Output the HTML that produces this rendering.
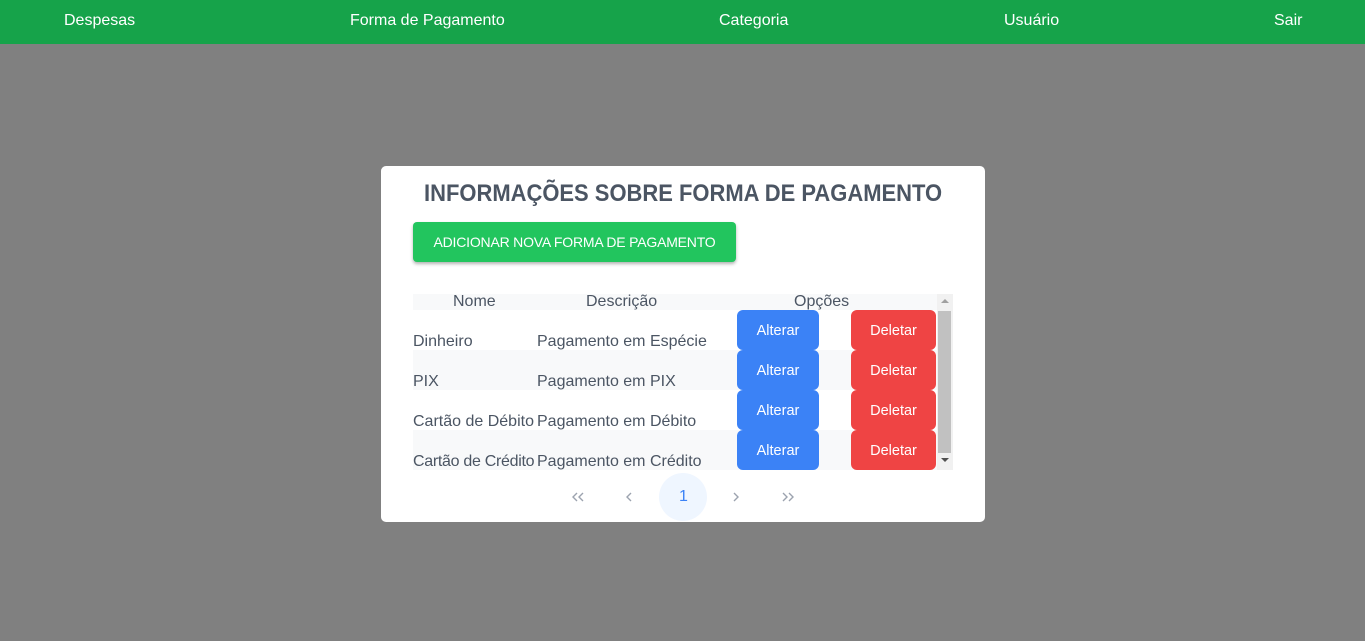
<!DOCTYPE html>
<html><head><meta charset="utf-8"><style>
*{margin:0;padding:0;box-sizing:border-box}
body{width:1365px;height:641px;background:#808080;font-family:"Liberation Sans",sans-serif;position:relative;overflow:hidden}
.nav{position:absolute;left:0;top:0;width:1365px;height:44px;background:#16a34a;color:#fff;font-size:16px}
.nav span{position:absolute;top:12px}
.card{position:absolute;left:381px;top:166px;width:604px;height:356px;background:#fff;border-radius:5px}
.title{position:absolute;left:43px;top:14px;font-size:24px;font-weight:bold;color:#4b5563;white-space:nowrap;transform-origin:0 0;transform:scaleX(0.915)}
.add{position:absolute;left:32px;top:56px;width:323px;height:40px;background:#22c55e;border-radius:4px;color:#fff;font-size:14px;letter-spacing:-0.2px;text-align:center;line-height:41px;box-shadow:0 2px 3px rgba(0,0,0,.3)}
.tbl{position:absolute;left:32px;top:128px;width:540px;height:176px;color:#4b5563;font-size:16px}
.hdr{position:absolute;left:0;top:0;width:524px;height:16px;background:#f8f9fa}
.hdr span{position:absolute;top:-1px}
.row{position:absolute;left:0;width:524px;height:40px}
.row.g{background:#f8f9fa}
.row span.t{position:absolute;top:23px;white-space:nowrap}
.b{position:absolute;top:0;height:40px;border-radius:6px;color:#fff;font-size:14.5px;text-align:center;line-height:43px}
.b.a{left:324px;width:82px;background:#3b82f6}
.b.d{left:438px;width:85px;background:#ef4444}
.sb{position:absolute;left:524px;top:0;width:16px;height:176px;background:#f1f1f1}
.sb .th{position:absolute;left:1px;top:17px;width:13px;height:142px;background:#c1c1c1}
.pg{position:absolute;top:325px}
</style></head><body>
<div class="nav">
<span style="left:64px">Despesas</span>
<span style="left:350px">Forma de Pagamento</span>
<span style="left:719px">Categoria</span>
<span style="left:1004px">Usuário</span>
<span style="left:1274px">Sair</span>
</div>
<div class="card">
<div class="title">INFORMAÇÕES SOBRE FORMA DE PAGAMENTO</div>
<div class="add">ADICIONAR NOVA FORMA DE PAGAMENTO</div>
<div class="tbl">
<div class="hdr"><span style="left:40px">Nome</span><span style="left:173px">Descrição</span><span style="left:381px">Opções</span></div>
<div class="row" style="top:16px"><span class="t" style="left:0">Dinheiro</span><span class="t" style="left:124px">Pagamento em Espécie</span><div class="b a">Alterar</div><div class="b d">Deletar</div></div>
<div class="row g" style="top:56px"><span class="t" style="left:0">PIX</span><span class="t" style="left:124px">Pagamento em PIX</span><div class="b a">Alterar</div><div class="b d">Deletar</div></div>
<div class="row" style="top:96px"><span class="t" style="left:0">Cartão de Débito</span><span class="t" style="left:124px">Pagamento em Débito</span><div class="b a">Alterar</div><div class="b d">Deletar</div></div>
<div class="row g" style="top:136px"><span class="t" style="left:0;letter-spacing:-0.3px">Cartão de Crédito</span><span class="t" style="left:124px">Pagamento em Crédito</span><div class="b a">Alterar</div><div class="b d">Deletar</div></div>
<div class="sb"><div style="position:absolute;left:4px;top:5px;border:4px solid transparent;border-bottom:4px solid #a0a0a0;border-top:0"></div><div class="th"></div><div style="position:absolute;left:4px;top:164px;border:4px solid transparent;border-top:4px solid #505050;border-bottom:0"></div></div>
</div>
<div style="position:absolute;left:278px;top:307px;width:48px;height:48px;border-radius:50%;background:#eff6ff"></div>
<svg class="pg" style="left:189px" width="16" height="12" viewBox="0 0 16 12" fill="none" stroke="#9ca3af" stroke-width="1.4"><path d="M7 2L3 6l4 4M13 2L9 6l4 4"/></svg>
<svg class="pg" style="left:243px" width="10" height="12" viewBox="0 0 10 12" fill="none" stroke="#9ca3af" stroke-width="1.4"><path d="M7 2L3 6l4 4"/></svg>
<span style="position:absolute;left:298px;top:322px;color:#3b82f6;font-size:16px">1</span>
<svg class="pg" style="left:350px" width="10" height="12" viewBox="0 0 10 12" fill="none" stroke="#9ca3af" stroke-width="1.4"><path d="M3 2l4 4-4 4"/></svg>
<svg class="pg" style="left:399px" width="16" height="12" viewBox="0 0 16 12" fill="none" stroke="#9ca3af" stroke-width="1.4"><path d="M3 2l4 4-4 4M9 2l4 4-4 4"/></svg>
</div>
</body></html>
